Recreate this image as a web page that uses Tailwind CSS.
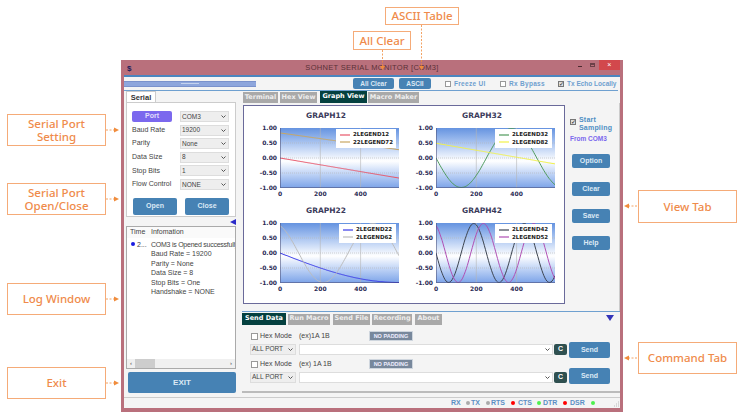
<!DOCTYPE html>
<html lang="en">
<head>
    <meta charset="UTF-8">
    <title>Sohnet Serial Monitor</title>
    <script src="https://cdn.jsdelivr.net/npm/@tailwindcss/browser@4"></script>
</head>
<body class="bg-white overflow-hidden">
<div class="relative w-[743px] h-[420px] bg-white font-['Liberation_Sans',sans-serif] text-[7px] text-[#444]">

    <!-- Callouts -->
    <div class="absolute left-[385px] top-[7px] w-[74px] h-[18px] border border-[#f5ab78] flex items-center justify-center text-[11.5px] font-medium text-[#ef8b4b] font-['Noto_Sans',sans-serif]">ASCII Table</div>
    <div class="absolute left-[353px] top-[31px] w-[58px] h-[19px] border border-[#f5ab78] flex items-center justify-center text-[11.5px] font-medium text-[#ef8b4b] font-['Noto_Sans',sans-serif]">All Clear</div>
    <div class="absolute left-[7px] top-[114px] w-[99px] h-[32px] border border-[#f5ab78] flex flex-col items-center justify-center text-[11.5px] font-medium text-[#ef8b4b] font-['Noto_Sans',sans-serif]"><span class="h-[13px] leading-[13px]">Serial Port</span><span class="h-[13px] leading-[13px]">Setting</span></div>
    <div class="absolute left-[7px] top-[183px] w-[99px] h-[32px] border border-[#f5ab78] flex flex-col items-center justify-center text-[11.5px] font-medium text-[#ef8b4b] font-['Noto_Sans',sans-serif]"><span class="h-[13px] leading-[13px]">Serial Port</span><span class="h-[13px] leading-[13px]">Open/Close</span></div>
    <div class="absolute left-[7px] top-[283px] w-[99px] h-[32px] border border-[#f5ab78] flex items-center justify-center text-[11.5px] font-medium text-[#ef8b4b] font-['Noto_Sans',sans-serif]">Log Window</div>
    <div class="absolute left-[7px] top-[367px] w-[99px] h-[32px] border border-[#f5ab78] flex items-center justify-center text-[11.5px] font-medium text-[#ef8b4b] font-['Noto_Sans',sans-serif]">Exit</div>
    <div class="absolute left-[638px] top-[190px] w-[99px] h-[33px] border border-[#f5ab78] flex items-center justify-center text-[11.5px] font-medium text-[#ef8b4b] font-['Noto_Sans',sans-serif]">View Tab</div>
    <div class="absolute left-[638px] top-[342px] w-[99px] h-[32px] border border-[#f5ab78] flex items-center justify-center text-[11.5px] font-medium text-[#ef8b4b] font-['Noto_Sans',sans-serif]">Command Tab</div>

    <!-- Application window -->
    <div class="absolute left-[121px] top-[60px] w-[502px] h-[352px] bg-[#f4f4f4] border-x-[3px] border-b-[4px] border-[#b9707c] flex flex-col">
        <!-- Title bar -->
        <div class="relative h-[15px] shrink-0 -mx-[3px] bg-[#b9707c] flex items-center justify-center text-[7.5px] tracking-[0.3px] text-[#5a3038]">
            <span class="absolute left-[6px] top-[3px] text-[8px] font-bold text-[#1c1c5a]">$</span>
            SOHNET SERIAL MONITOR [COM3]
            <span class="absolute left-[457px] top-[6px] w-[4px] h-[1px] bg-[#4b2a30]"></span>
            <span class="absolute left-[469px] top-[3px] w-[5px] h-[4px] border border-[#6b4048] border-t-2"></span>
            <span class="absolute left-[478px] top-0 w-[21px] h-[10px] bg-[#d2484c] flex items-center justify-center text-[7px] text-white">×</span>
        </div>
        <div class="h-[2px] shrink-0 bg-[#4a86c0]"></div>

        <!-- Toolbar -->
        <div class="h-[14px] shrink-0 relative flex items-center border-b border-[#6fa0d0] mr-[2px]">
            <div class="w-[132px] shrink-0 h-[6px] bg-[#8ea6dc] border-y border-[#7a92cc] flex items-center justify-center">
                <div class="w-[18px] h-[1px] bg-[#c4d2ee]"></div>
            </div>
            <div class="ml-[97px] w-[41px] shrink-0 h-[11px] rounded-[2px] bg-[#4682b4] text-[#dce9f4] text-[6.5px] font-bold flex items-center justify-center">All Clear</div>
            <div class="ml-[5px] w-[32px] shrink-0 h-[11px] rounded-[2px] bg-[#4682b4] text-[#dce9f4] text-[6.5px] font-bold flex items-center justify-center">ASCII</div>
            <div class="ml-[14px] w-[6px] shrink-0 h-[6px] border border-[#999] bg-white"></div>
            <span class="ml-[3px] w-[46px] shrink-0 text-[#6f9fcf] text-[6.5px] font-bold tracking-[0.3px]">Freeze UI</span>
            <div class="w-[6px] shrink-0 h-[6px] border border-[#999] bg-white"></div>
            <span class="ml-[3px] w-[49px] shrink-0 text-[#6f9fcf] text-[6.5px] font-bold tracking-[0.3px]">Rx Bypass</span>
            <div class="w-[6px] shrink-0 h-[6px] border border-[#777] bg-[#ddd] flex items-center justify-center text-[6px] leading-none text-[#222]">✓</div>
            <span class="ml-[3px] shrink-0 text-[#6f9fcf] text-[6.5px] font-bold whitespace-nowrap">Tx Echo Locally</span>
        </div>

        <!-- Body -->
        <div class="flex flex-1 min-h-0">
            <!-- Left column -->
            <div class="w-[117px] shrink-0 pl-[2px] pr-[5px] flex flex-col">
                <div class="w-[30px] h-[12px] bg-white border border-b-0 border-[#ccc] flex items-center justify-center font-bold text-[7.5px] text-[#333]">Serial</div>
                <div class="h-[115px] bg-white border border-[#ccc] -mt-[1px] pl-[5px] pr-[6px] pt-[8px] flex flex-col gap-[2.6px]" id="serial-panel">
                    <div class="flex items-center justify-between h-[11px]">
                        <div class="w-[40px] h-[11px] rounded-[2px] bg-[#7b68ee] text-[#e2defc] font-bold flex items-center justify-center">Port</div>
                        <div class="w-[49px] h-[11px] bg-[#eee] border border-[#ddd] pl-[1px] pr-[2px] flex items-center justify-between text-[6.5px]">COM3<svg class="w-[5px] h-[3px]" viewBox="0 0 5 3"><path d="M0.5 0.5 L2.5 2.5 L4.5 0.5" fill="none" stroke="#555"/></svg></div>
                    </div>
                    <div class="flex items-center justify-between h-[11px]"><span>Baud Rate</span>
                        <div class="w-[49px] h-[11px] bg-[#eee] border border-[#ddd] pl-[1px] pr-[2px] flex items-center justify-between text-[6.5px]">19200<svg class="w-[5px] h-[3px]" viewBox="0 0 5 3"><path d="M0.5 0.5 L2.5 2.5 L4.5 0.5" fill="none" stroke="#555"/></svg></div>
                    </div>
                    <div class="flex items-center justify-between h-[11px]"><span>Parity</span>
                        <div class="w-[49px] h-[11px] bg-[#eee] border border-[#ddd] pl-[1px] pr-[2px] flex items-center justify-between text-[6.5px]">None<svg class="w-[5px] h-[3px]" viewBox="0 0 5 3"><path d="M0.5 0.5 L2.5 2.5 L4.5 0.5" fill="none" stroke="#555"/></svg></div>
                    </div>
                    <div class="flex items-center justify-between h-[11px]"><span>Data Size</span>
                        <div class="w-[49px] h-[11px] bg-[#eee] border border-[#ddd] pl-[1px] pr-[2px] flex items-center justify-between text-[6.5px]">8<svg class="w-[5px] h-[3px]" viewBox="0 0 5 3"><path d="M0.5 0.5 L2.5 2.5 L4.5 0.5" fill="none" stroke="#555"/></svg></div>
                    </div>
                    <div class="flex items-center justify-between h-[11px]"><span>Stop Bits</span>
                        <div class="w-[49px] h-[11px] bg-[#eee] border border-[#ddd] pl-[1px] pr-[2px] flex items-center justify-between text-[6.5px]">1<svg class="w-[5px] h-[3px]" viewBox="0 0 5 3"><path d="M0.5 0.5 L2.5 2.5 L4.5 0.5" fill="none" stroke="#555"/></svg></div>
                    </div>
                    <div class="flex items-center justify-between h-[11px]"><span>Flow Control</span>
                        <div class="w-[49px] h-[11px] bg-[#eee] border border-[#ddd] pl-[1px] pr-[2px] flex items-center justify-between text-[6.5px]">NONE<svg class="w-[5px] h-[3px]" viewBox="0 0 5 3"><path d="M0.5 0.5 L2.5 2.5 L4.5 0.5" fill="none" stroke="#555"/></svg></div>
                    </div>
                    <div class="flex justify-between mt-[5px] pl-[1px]">
                        <div class="w-[44px] h-[17px] rounded-[2px] bg-[#4682b4] text-[#dce9f4] font-bold flex items-center justify-center">Open</div>
                        <div class="w-[44px] h-[17px] rounded-[2px] bg-[#4682b4] text-[#dce9f4] font-bold flex items-center justify-center">Close</div>
                    </div>
                </div>
                <div class="h-[9px] flex justify-end items-center">
                    <svg class="w-[6px] h-[6px]" viewBox="0 0 6 6"><path d="M6 0 V6 L0 3 Z" fill="#2a2ac8"/></svg>
                </div>
                <!-- Log -->
                <div class="h-[143px] bg-white border border-[#aaa] flex flex-col overflow-hidden">
                    <div class="h-[11px] shrink-0 flex items-center bg-[#fafafa]"><span class="w-[24px] pl-[3px]">Time</span><span>Infomation</span></div>
                    <div class="flex-1 pt-[1.5px] leading-[9.5px] whitespace-nowrap overflow-hidden">
                        <div class="flex items-center h-[9.5px]"><span class="ml-[4px] w-[4px] h-[4px] shrink-0 rounded-full bg-[#1a1ae0]"></span><span class="ml-[2px] w-[14px] shrink-0">2...</span><span class="tracking-[-0.25px]">COM3 is Opened successfully</span></div>
                        <div class="pl-[24px]">Baud Rate = 19200</div>
                        <div class="pl-[24px]">Parity = None</div>
                        <div class="pl-[24px]">Data Size = 8</div>
                        <div class="pl-[24px]">Stop Bits = One</div>
                        <div class="pl-[24px]">Handshake = NONE</div>
                    </div>
                    <div class="h-[9px] shrink-0 bg-[#f0f0f0] flex items-center justify-between px-[3px] text-[6px] relative">
                        <span>‹</span><span class="absolute left-[8px] top-0 w-[20px] h-[9px] bg-[#cdcdcd]"></span><span>›</span>
                    </div>
                </div>
                <div class="mt-[3px] ml-[2px] h-[21px] rounded-[2px] bg-[#4682b4] text-[#dce9f4] text-[8px] font-bold flex items-center justify-center">EXIT</div>
            </div>

            <!-- Right column -->
            <div class="flex-1 min-w-0 flex flex-col pl-[1px] pr-0">
                <div class="h-[12px] shrink-0 flex items-end gap-[2px] font-['DejaVu_Sans',sans-serif] font-bold text-[6.5px] text-[#eee]">
                    <div class="w-[35px] h-[11px] ml-[1px] bg-[#a9a9a9] flex items-center justify-center">Terminal</div>
                    <div class="w-[37px] h-[11px] bg-[#a9a9a9] flex items-center justify-center">Hex View</div>
                    <div class="w-[47px] h-[12px] ml-[1px] bg-[#04403f] text-white flex items-center justify-center">Graph View</div>
                    <div class="w-[51px] h-[11px] -ml-[1px] bg-[#a9a9a9] flex items-center justify-center">Macro Maker</div>
                </div>
                <div class="h-[208px] shrink-0 flex pt-[2px] border-r border-[#ccc]">
                    <div id="charts" class="ml-[1px] w-[322px] h-[199px] bg-white border border-[#6a6a9a] pl-[4px] pt-[2px] grid grid-cols-[156px_156px] grid-rows-[95px_95px]"></div>
                    <!-- Side buttons -->
                    <div class="pl-[7px] flex flex-col w-[52px]">
                        <div class="flex mt-[11px] gap-[3px] -ml-[2px]">
                            <div class="w-[6px] h-[6px] mt-[3px] border border-[#777] bg-[#ddd] flex items-center justify-center text-[6px] leading-none text-[#222]">✓</div>
                            <span class="leading-[8px] text-[#4f8fc4] text-[7px] font-bold tracking-[0.2px]">Start<br>Sampling</span>
                        </div>
                        <span class="mt-[3px] -ml-[2px] text-[#7b68ee] text-[6.5px] font-bold whitespace-nowrap leading-[8px]">From COM3</span>
                        <div class="mt-[11px] w-[38px] h-[14px] rounded-[2px] bg-[#4682b4] text-[#dce9f4] font-bold flex items-center justify-center">Option</div>
                        <div class="mt-[14px] w-[38px] h-[14px] rounded-[2px] bg-[#4682b4] text-[#dce9f4] font-bold flex items-center justify-center">Clear</div>
                        <div class="mt-[13px] w-[38px] h-[14px] rounded-[2px] bg-[#4682b4] text-[#dce9f4] font-bold flex items-center justify-center">Save</div>
                        <div class="mt-[13px] w-[38px] h-[14px] rounded-[2px] bg-[#4682b4] text-[#dce9f4] font-bold flex items-center justify-center">Help</div>
                    </div>
                </div>

                <!-- Command tab -->
                <div class="h-[82px] shrink-0 border-t border-[#6fa0d0] border-b-2 border-b-[#bbb] flex flex-col">
                    <div class="h-[12px] mt-[1px] shrink-0 flex items-center gap-[2px] font-['DejaVu_Sans',sans-serif] font-bold text-[6.5px] text-[#eee] relative">
                        <div class="w-[44px] h-[12px] bg-[#04403f] text-white flex items-center justify-center">Send Data</div>
                        <div class="w-[42px] h-[11px] bg-[#a9a9a9] flex items-center justify-center">Run Macro</div>
                        <div class="w-[37px] h-[11px] ml-[1px] bg-[#a9a9a9] flex items-center justify-center">Send File</div>
                        <div class="w-[40px] h-[11px] bg-[#a9a9a9] flex items-center justify-center">Recording</div>
                        <div class="w-[27px] h-[11px] ml-[1px] bg-[#a9a9a9] flex items-center justify-center">About</div>
                        <svg class="absolute left-[364px] top-[2px] w-[8px] h-[6px]" viewBox="0 0 8 6"><path d="M0 0 H8 L4 6 Z" fill="#3434b8"/></svg>
                    </div>
                    <div class="flex mt-[4px] pl-[8px]">
                        <div class="w-[318px] shrink-0 flex flex-col">
                            <div class="h-[12px] mt-[1px] flex items-center"><span class="w-[7px] h-[7px] ml-[1px] border border-[#999] bg-white"></span><span class="ml-[2px] w-[39px]">Hex Mode</span><span class="w-[70px]">(ex)1A 1B</span><span class="w-[44px] h-[10px] bg-[#78889c] border border-[#cfd6de] text-[#eef] text-[5.5px] font-bold flex items-center justify-center">NO PADDING</span></div>
                            <div class="h-[12px] mt-[1px] flex items-center"><div class="w-[46px] h-[11px] bg-[#eee] border border-[#ddd] pl-[1px] pr-[2px] flex items-center justify-between text-[6.5px]">ALL PORT<svg class="w-[5px] h-[3px]" viewBox="0 0 5 3"><path d="M0.5 0.5 L2.5 2.5 L4.5 0.5" fill="none" stroke="#555"/></svg></div><div class="ml-[3px] w-[254px] h-[11px] bg-white border border-[#ddd] flex items-center justify-end pr-[2px]"><svg class="w-[5px] h-[3px]" viewBox="0 0 5 3"><path d="M0.5 0.5 L2.5 2.5 L4.5 0.5" fill="none" stroke="#555"/></svg></div><div class="ml-[1px] w-[13px] h-[11px] rounded-[2px] bg-[#2f5050] text-white font-bold flex items-center justify-center">C</div></div>
                            <div class="h-[12px] mt-[3px] flex items-center"><span class="w-[7px] h-[7px] ml-[1px] border border-[#999] bg-white"></span><span class="ml-[2px] w-[39px]">Hex Mode</span><span class="w-[70px]">(ex) 1A 1B</span><span class="w-[44px] h-[10px] bg-[#78889c] border border-[#cfd6de] text-[#eef] text-[5.5px] font-bold flex items-center justify-center">NO PADDING</span></div>
                            <div class="h-[12px] mt-[1px] flex items-center"><div class="w-[46px] h-[11px] bg-[#eee] border border-[#ddd] pl-[1px] pr-[2px] flex items-center justify-between text-[6.5px]">ALL PORT<svg class="w-[5px] h-[3px]" viewBox="0 0 5 3"><path d="M0.5 0.5 L2.5 2.5 L4.5 0.5" fill="none" stroke="#555"/></svg></div><div class="ml-[3px] w-[254px] h-[11px] bg-white border border-[#ddd] flex items-center justify-end pr-[2px]"><svg class="w-[5px] h-[3px]" viewBox="0 0 5 3"><path d="M0.5 0.5 L2.5 2.5 L4.5 0.5" fill="none" stroke="#555"/></svg></div><div class="ml-[1px] w-[13px] h-[11px] rounded-[2px] bg-[#2f5050] text-white font-bold flex items-center justify-center">C</div></div>
                        </div>
                        <div class="ml-[1px] flex flex-col gap-[10px] mt-[13px]">
                            <div class="w-[41px] h-[16px] rounded-[2px] bg-[#4682b4] text-[#dce9f4] font-bold flex items-center justify-center">Send</div>
                            <div class="w-[41px] h-[16px] rounded-[2px] bg-[#4682b4] text-[#dce9f4] font-bold flex items-center justify-center">Send</div>
                        </div>
                    </div>
                </div>
            </div>
        </div>

        <!-- Status bar -->
        <div class="h-[11px] shrink-0 border-t border-[#ccc] relative flex items-center pl-[327px] text-[7px] font-bold text-[#5b8fc4]">
            <span class="w-[15px] shrink-0">RX</span><span class="w-[4px] h-[4px] shrink-0 rounded-full bg-[#aaa]"></span>
            <span class="ml-[1px] w-[15px] shrink-0">TX</span><span class="w-[4px] h-[4px] shrink-0 rounded-full bg-[#aaa]"></span>
            <span class="ml-[1px] w-[20px] shrink-0">RTS</span><span class="w-[4px] h-[4px] shrink-0 rounded-full bg-[#f00]"></span>
            <span class="ml-[3px] w-[19px] shrink-0">CTS</span><span class="w-[4px] h-[4px] shrink-0 rounded-full bg-[#4ef04e]"></span>
            <span class="ml-[2px] w-[20px] shrink-0">DTR</span><span class="w-[4px] h-[4px] shrink-0 rounded-full bg-[#f00]"></span>
            <span class="ml-[3px] w-[21px] shrink-0">DSR</span><span class="w-[4px] h-[4px] shrink-0 rounded-full bg-[#4ef04e]"></span>
            <svg class="absolute right-[1px] bottom-[1px] w-[6px] h-[6px]" viewBox="0 0 6 6"><path d="M5.5 0.5 V1.5 M3.5 2.5 V3.5 M5.5 2.5 V3.5 M1.5 4.5 V5.5 M3.5 4.5 V5.5 M5.5 4.5 V5.5" stroke="#bbb"/></svg>
        </div>
    </div>

    <!-- Callout arrows -->
    <svg class="absolute left-0 top-0 w-[743px] h-[420px] pointer-events-none" viewBox="0 0 743 420">
        <g stroke="#f08c3c" stroke-width="0.8" stroke-dasharray="2 1.5" fill="none">
            <path d="M382.5 50 V66"/><path d="M421.5 25 V66"/>
            <path d="M106 130 H115"/><path d="M106 199 H115"/><path d="M106 299 H115"/><path d="M106 383 H115"/>
            <path d="M628 206 H638"/><path d="M628 358 H638"/>
        </g>
        <g fill="#f08c3c">
            <path d="M380 66 H385 L382.5 70 Z"/><path d="M419 66 H424 L421.5 70 Z"/>
            <path d="M114 127.5 V132.5 L119 130 Z"/><path d="M114 196.5 V201.5 L119 199 Z"/><path d="M114 296.5 V301.5 L119 299 Z"/><path d="M114 380.5 V385.5 L119 383 Z"/>
            <path d="M629 203.5 V208.5 L624 206 Z"/><path d="M629 355.5 V360.5 L624 358 Z"/>
        </g>
    </svg>
</div>

<script>
    // x runs 0..590 over the plot, y -1..1
    const TAU = Math.PI * 2;
    const charts = [
        { title: 'GRAPH12', legend: ['2LEGEND12', '22LEGEND72'], legendW: 'w-[60px]', series: [
            { color: '#e8566a', fn: x => -0.68 * x / 590 },
            { color: '#c9a763', fn: x => 0.85 - 0.57 * x / 590 } ] },
        { title: 'GRAPH32', legend: ['2LEGEND32', '2LEGEND82'], legendW: 'w-[57px]', series: [
            { color: '#4f9a5c', fn: x => -Math.sin(TAU * x / 500) },
            { color: '#f2f24a', fn: x => 0.5 - 0.7 * x / 590 } ] },
        { title: 'GRAPH22', legend: ['2LEGEND22', '2LEGEND62'], legendW: 'w-[57px]', series: [
            { color: '#3a3ae8', fn: x => -Math.sin(x / 590 * Math.PI / 2) },
            { color: '#bdbdbd', fn: x => Math.cos(TAU * (x + 30) / 490) } ] },
        { title: 'GRAPH42', legend: ['2LEGEND42', '2LEGEND52'], legendW: 'w-[57px]', series: [
            { color: '#3c4450', fn: x => -Math.sin(TAU * x / 250) },
            { color: '#b04fb4', fn: x => Math.cos(TAU * (x - 235) / 250) } ] }
    ];

    function points(fn) {
        const out = [];
        for (let x = 0; x <= 590; x += 5) {
            out.push((x / 590 * 119).toFixed(1) + ',' + (30 - 29.5 * fn(x)).toFixed(1));
        }
        return out.join(' ');
    }

    document.getElementById('charts').innerHTML = charts.map(c => `
        <div class="flex flex-col">
            <div class="h-[20px] pb-[4px] flex items-center justify-center font-['DejaVu_Sans',sans-serif] text-[7.5px] font-bold text-[#3a3a5a]">${c.title}</div>
            <div class="flex">
                <div class="w-[29px] h-[68px] -my-[4px] flex flex-col justify-between items-end font-['DejaVu_Sans',sans-serif] text-[6px] font-bold leading-[8px] text-[#2a2a55]">
                    <span>1.00</span><span>0.50</span><span>0.00</span><span>-0.50</span><span>-1.00</span>
                </div>
                <div class="relative ml-[3px] w-[119px] h-[60px] bg-linear-to-b from-[#6593e0] via-white via-55% to-[#7ca3e8]">
                    <svg class="absolute inset-0 w-[119px] h-[60px]" viewBox="0 0 119 60">
                        <path d="M40.3 0 V60 M80.6 0 V60" stroke="#b5b5b5" stroke-width="0.6"/>
                        <path d="M0 15 H119 M0 30 H119 M0 45 H119" stroke="#b5b5b5" stroke-width="0.6" stroke-dasharray="1 1"/>
                        ${c.series.map(s => `<polyline points="${points(s.fn)}" fill="none" stroke="${s.color}" stroke-width="1"/>`).join('')}
                        <path d="M0.3 0 V59.7 H119" fill="none" stroke="#4a4f78" stroke-width="0.7"/>
                    </svg>
                    <div class="absolute right-[3px] top-[1px] ${c.legendW} h-[19px] bg-white flex flex-col justify-center pl-[4px] font-['DejaVu_Sans',sans-serif] text-[5.5px] font-bold leading-[7.5px] text-[#222]">
                        ${c.legend.map((name, i) => `<div class="flex items-center gap-[3px] whitespace-nowrap"><svg class="w-[10px] h-[2px] shrink-0" viewBox="0 0 10 2"><path d="M0 1 H10" stroke="${c.series[i].color}" stroke-width="1.2"/></svg>${name}</div>`).join('')}
                    </div>
                </div>
            </div>
            <div class="ml-[22px] mt-[2px] flex gap-[20.3px] font-['DejaVu_Sans',sans-serif] text-[6px] font-bold leading-[8px] text-[#2a2a55]">
                <span class="w-[20px] text-center">0</span><span class="w-[20px] text-center">200</span><span class="w-[20px] text-center">400</span>
            </div>
        </div>
    `).join('');
</script>
</body>
</html>
